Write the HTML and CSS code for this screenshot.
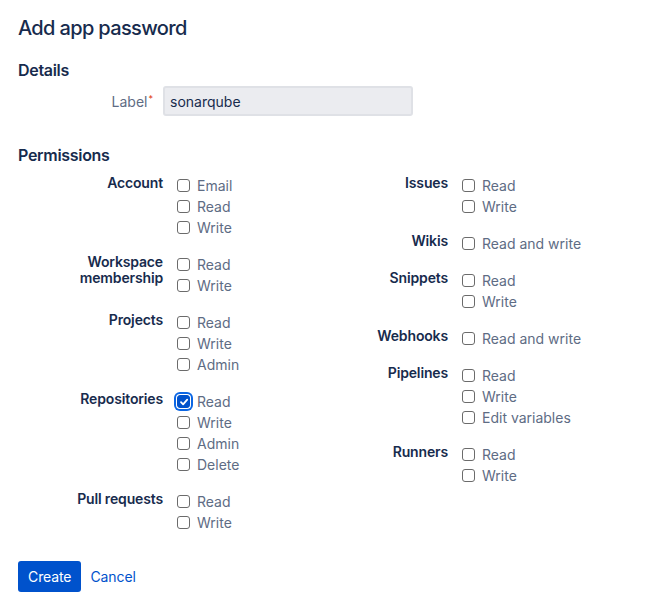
FILE: index.html
```html
<!DOCTYPE html>
<html lang="en">
<head>
<meta charset="utf-8">
<title>Add app password</title>
<link rel="stylesheet" href="styles.css">
</head>
<body>
<div class="page">
  <h1 class="title">Add app password</h1>
  <h2 class="section">Details</h2>
  <div class="field">
    <label class="field-label" for="lbl">Label<span class="req">*</span></label>
    <input id="lbl" class="text-input" type="text" value="sonarqube">
  </div>

  <h2 class="section perm-title">Permissions</h2>
  <div class="perms">
    <div class="col col-left">
      <div class="group">
        <div class="g-label">Account</div>
        <div class="opts">
          <label class="opt"><span class="box"></span>Email</label>
          <label class="opt"><span class="box"></span>Read</label>
          <label class="opt"><span class="box"></span>Write</label>
        </div>
      </div>
      <div class="group">
        <div class="g-label">Workspace membership</div>
        <div class="opts">
          <label class="opt"><span class="box"></span>Read</label>
          <label class="opt"><span class="box"></span>Write</label>
        </div>
      </div>
      <div class="group">
        <div class="g-label">Projects</div>
        <div class="opts">
          <label class="opt"><span class="box"></span>Read</label>
          <label class="opt"><span class="box"></span>Write</label>
          <label class="opt"><span class="box"></span>Admin</label>
        </div>
      </div>
      <div class="group">
        <div class="g-label">Repositories</div>
        <div class="opts">
          <label class="opt"><span class="box checked"><svg width="10" height="10" viewBox="0 0 10 10"><path d="M2 5.2 L4.1 7.3 L8.2 2.6" fill="none" stroke="#fff" stroke-width="1.8" stroke-linecap="round" stroke-linejoin="round"/></svg></span>Read</label>
          <label class="opt"><span class="box"></span>Write</label>
          <label class="opt"><span class="box"></span>Admin</label>
          <label class="opt"><span class="box"></span>Delete</label>
        </div>
      </div>
      <div class="group">
        <div class="g-label">Pull requests</div>
        <div class="opts">
          <label class="opt"><span class="box"></span>Read</label>
          <label class="opt"><span class="box"></span>Write</label>
        </div>
      </div>
    </div>
    <div class="col col-right">
      <div class="group">
        <div class="g-label">Issues</div>
        <div class="opts">
          <label class="opt"><span class="box"></span>Read</label>
          <label class="opt"><span class="box"></span>Write</label>
        </div>
      </div>
      <div class="group">
        <div class="g-label">Wikis</div>
        <div class="opts">
          <label class="opt"><span class="box"></span>Read and write</label>
        </div>
      </div>
      <div class="group">
        <div class="g-label">Snippets</div>
        <div class="opts">
          <label class="opt"><span class="box"></span>Read</label>
          <label class="opt"><span class="box"></span>Write</label>
        </div>
      </div>
      <div class="group">
        <div class="g-label">Webhooks</div>
        <div class="opts">
          <label class="opt"><span class="box"></span>Read and write</label>
        </div>
      </div>
      <div class="group">
        <div class="g-label">Pipelines</div>
        <div class="opts">
          <label class="opt"><span class="box"></span>Read</label>
          <label class="opt"><span class="box"></span>Write</label>
          <label class="opt"><span class="box"></span>Edit variables</label>
        </div>
      </div>
      <div class="group">
        <div class="g-label">Runners</div>
        <div class="opts">
          <label class="opt"><span class="box"></span>Read</label>
          <label class="opt"><span class="box"></span>Write</label>
        </div>
      </div>
    </div>
  </div>

  <div class="actions">
    <button class="btn-primary" type="button">Create</button>
    <a class="btn-link" href="#">Cancel</a>
  </div>
</div>
</body>
</html>
```

FILE: styles.css
```css
* { box-sizing: border-box; }
html, body { margin: 0; background: #fff; }
body {
  font-family: Inter, "Noto Sans", "Liberation Sans", sans-serif;
  font-size: 14px;
  color: #172b4d;
}
.page { padding: 16px 18px 0 18px; }
.title {
  margin: 0;
  font-size: 20px;
  line-height: 24px;
  font-weight: 500;
  color: #172b4d;
  letter-spacing: -0.65px;
}
.section {
  margin: 20px 0 6px 0;
  font-size: 16px;
  line-height: 20px;
  font-weight: 600;
  color: #172b4d;
  letter-spacing: -0.3px;
}
.perm-title { margin-top: 29px; margin-bottom: 10px; }
.field {
  display: grid;
  grid-template-columns: 145px 250px;
  align-items: center;
}
.field-label {
  text-align: right;
  padding-right: 10px;
  color: #5e6c84;
  font-size: 14px;
}
.req { color: #de350b; font-size: 9px; vertical-align: 5px; margin-left: 1px; }
.text-input {
  height: 30px;
  width: 250px;
  border: 2px solid #dfe1e6;
  background: #ebecf0;
  border-radius: 3px;
  padding: 0 5px;
  font-family: inherit;
  font-size: 14px;
  color: #172b4d;
  outline: none;
}
.perms {
  display: grid;
  grid-template-columns: 300px 1fr;
}
.col { display: flex; flex-direction: column; gap: 16px; }
.group { display: grid; column-gap: 14px; align-items: start; }
.col-left .group { grid-template-columns: 145px auto; }
.col-right .group { grid-template-columns: 130px auto; }
.g-label {
  text-align: right;
  font-weight: 600;
  line-height: 16px;
  color: #172b4d;
  letter-spacing: -0.15px;
}
.opts { display: flex; flex-direction: column; }
.opt {
  display: flex;
  align-items: center;
  height: 21px;
  color: #5e6c84;
  line-height: 21px;
}
.box {
  width: 13px;
  height: 13px;
  border: 1px solid #6b6b6b;
  border-radius: 3px;
  margin-right: 7px;
  background: #fff;
  flex: none;
  display: flex;
  align-items: center;
  justify-content: center;
}
.box.checked {
  background: #0052cc;
  border-color: #0052cc;
  box-shadow: 0 0 0 1px #fff, 0 0 0 3px #0b66e4;
}
.actions {
  display: flex;
  align-items: center;
  margin-top: 28px;
}
.btn-primary {
  height: 31px;
  padding: 0 10px;
  border: none;
  border-radius: 3px;
  background: #0052cc;
  color: #fff;
  font-family: inherit;
  font-size: 14px;
  letter-spacing: -0.1px;
}
.btn-link {
  margin-left: 9px;
  color: #0052cc;
  text-decoration: none;
  font-size: 14px;
  letter-spacing: -0.1px;
}
```
